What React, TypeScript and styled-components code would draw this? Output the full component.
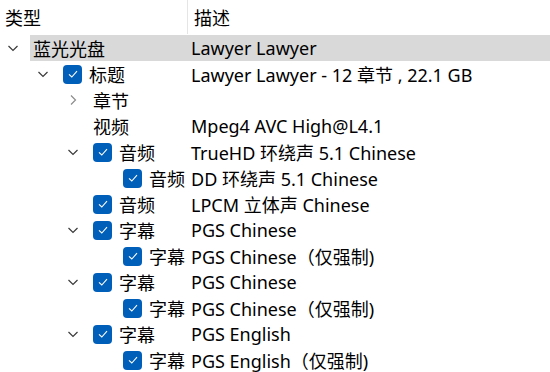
import React from "react";
import styled, { createGlobalStyle } from "styled-components";

const GlobalStyle = createGlobalStyle`
  html, body {
    margin: 0;
    padding: 0;
    background: #ffffff;
  }
  body {
    font-family: "Noto Sans", "Noto Sans CJK SC", sans-serif;
    font-size: 18px;
    color: #000000;
  }
`;

const INDENT = 30;
const DESC_X = 191;

type Node = {
  level: number;
  type: string;
  desc?: string;
  expander?: "open" | "closed";
  checked?: boolean;
  selected?: boolean;
};

const rows: Node[] = [
  { level: 0, type: "蓝光光盘", desc: "Lawyer Lawyer", expander: "open", selected: true },
  { level: 1, type: "标题", desc: "Lawyer Lawyer - 12 章节 , 22.1 GB", expander: "open", checked: true },
  { level: 2, type: "章节", expander: "closed" },
  { level: 2, type: "视频", desc: "Mpeg4 AVC High@L4.1" },
  { level: 2, type: "音频", desc: "TrueHD 环绕声 5.1 Chinese", expander: "open", checked: true },
  { level: 3, type: "音频", desc: "DD 环绕声 5.1 Chinese", checked: true },
  { level: 2, type: "音频", desc: "LPCM 立体声 Chinese", checked: true },
  { level: 2, type: "字幕", desc: "PGS Chinese", expander: "open", checked: true },
  { level: 3, type: "字幕", desc: "PGS Chinese（仅强制)", checked: true },
  { level: 2, type: "字幕", desc: "PGS Chinese", expander: "open", checked: true },
  { level: 3, type: "字幕", desc: "PGS Chinese（仅强制)", checked: true },
  { level: 2, type: "字幕", desc: "PGS English", expander: "open", checked: true },
  { level: 3, type: "字幕", desc: "PGS English（仅强制)", checked: true },
];

const Tree = styled.div`
  width: 550px;
  height: 372px;
  overflow: hidden;
  background: #ffffff;
`;

const Header = styled.div`
  display: grid;
  grid-template-columns: 187px 1fr;
  height: 35px;
`;

const HeaderCell = styled.div<{ $divider?: boolean }>`
  display: flex;
  align-items: center;
  height: 34px;
  padding-left: ${(p) => (p.$divider ? "6px" : "5px")};
  border-left: ${(p) => (p.$divider ? "1px solid #e5e5e5" : "none")};
`;

const Row = styled.div`
  display: flex;
  height: 26px;
  align-items: stretch;
`;

const Lead = styled.div<{ $level: number }>`
  flex: none;
  width: ${(p) => p.$level * INDENT + 30}px;
  padding-left: ${(p) => p.$level * INDENT}px;
  box-sizing: border-box;
  display: flex;
  align-items: center;
`;

const Expander = styled.span`
  width: 26px;
  height: 26px;
  display: flex;
  align-items: center;
  justify-content: center;
`;

const Body = styled.div<{ $level: number; $selected?: boolean }>`
  flex: 1;
  display: grid;
  grid-template-columns: ${(p) => DESC_X - (p.$level * INDENT + 30)}px 1fr;
  align-items: center;
  background: ${(p) => (p.$selected ? "#d9d9d9" : "transparent")};
`;

const NameCell = styled.div`
  display: flex;
  align-items: center;
  gap: 7px;
  padding-left: 3px;
  white-space: nowrap;
`;

const DescCell = styled.div`
  white-space: nowrap;
`;

const Box = styled.span`
  width: 19px;
  height: 19px;
  border-radius: 4px;
  background: #005fb8;
  display: flex;
  align-items: center;
  justify-content: center;
  flex: none;
`;

function Chevron({ open }: { open: boolean }) {
  return open ? (
    <svg width="12" height="12" viewBox="0 0 12 12">
      <path d="M1.5 4 L6 8.5 L10.5 4" fill="none" stroke="#3a3a3a" strokeWidth="1.2" />
    </svg>
  ) : (
    <svg width="12" height="12" viewBox="0 0 12 12">
      <path d="M4 1.5 L8.5 6 L4 10.5" fill="none" stroke="#8c8c8c" strokeWidth="1.2" />
    </svg>
  );
}

function Check() {
  return (
    <Box>
      <svg width="12" height="12" viewBox="0 0 12 12">
        <path d="M2 6.3 L4.8 9 L10 3.2" fill="none" stroke="#ffffff" strokeWidth="1.1" />
      </svg>
    </Box>
  );
}

export default function App() {
  return (
    <Tree>
      <GlobalStyle />
      <Header>
        <HeaderCell>类型</HeaderCell>
        <HeaderCell $divider>描述</HeaderCell>
      </Header>
      {rows.map((r, i) => (
        <Row key={i}>
          <Lead $level={r.level}>
            <Expander>{r.expander && <Chevron open={r.expander === "open"} />}</Expander>
          </Lead>
          <Body $level={r.level} $selected={r.selected}>
            <NameCell>
              {r.checked && <Check />}
              <span>{r.type}</span>
            </NameCell>
            <DescCell>{r.desc}</DescCell>
          </Body>
        </Row>
      ))}
    </Tree>
  );
}
